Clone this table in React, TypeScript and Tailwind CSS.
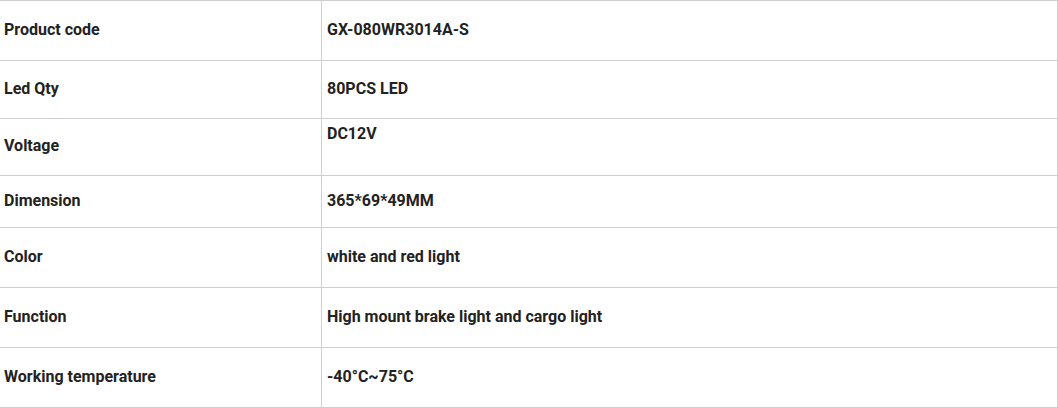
const rows = [
  { label: "Product code", value: "GX-080WR3014A-S", h: "h-[60px]" },
  { label: "Led Qty", value: "80PCS LED", h: "h-[58px]" },
  { label: "Voltage", value: "DC12V", h: "h-[57px]", top: true },
  { label: "Dimension", value: "365*69*49MM", h: "h-[52px]" },
  { label: "Color", value: "white and red light", h: "h-[60px]" },
  { label: "Function", value: "High mount brake light and cargo light", h: "h-[60px]" },
  { label: "Working temperature", value: "-40°C~75°C", h: "h-[60px]" },
];

const App = () => {
  return (
    <div className="w-[1058px] h-[408px] bg-white font-['Roboto',sans-serif] text-[16px] font-bold text-[#222] leading-5">
      <div className="border-t border-r border-[#cfcfcf]">
        {rows.map((r) => (
          <div key={r.label} className={`flex border-b border-[#cfcfcf] ${r.h}`}>
            <div className="w-[322px] shrink-0 border-r border-[#cfcfcf] flex items-center pl-[4px] pb-[2px]">
              {r.label}
            </div>
            <div className={`flex-1 flex pl-[5px] ${r.top ? "items-start pt-[5px]" : "items-center pb-[2px]"}`}>
              {r.value}
            </div>
          </div>
        ))}
      </div>
    </div>
  );
};

export default App;
